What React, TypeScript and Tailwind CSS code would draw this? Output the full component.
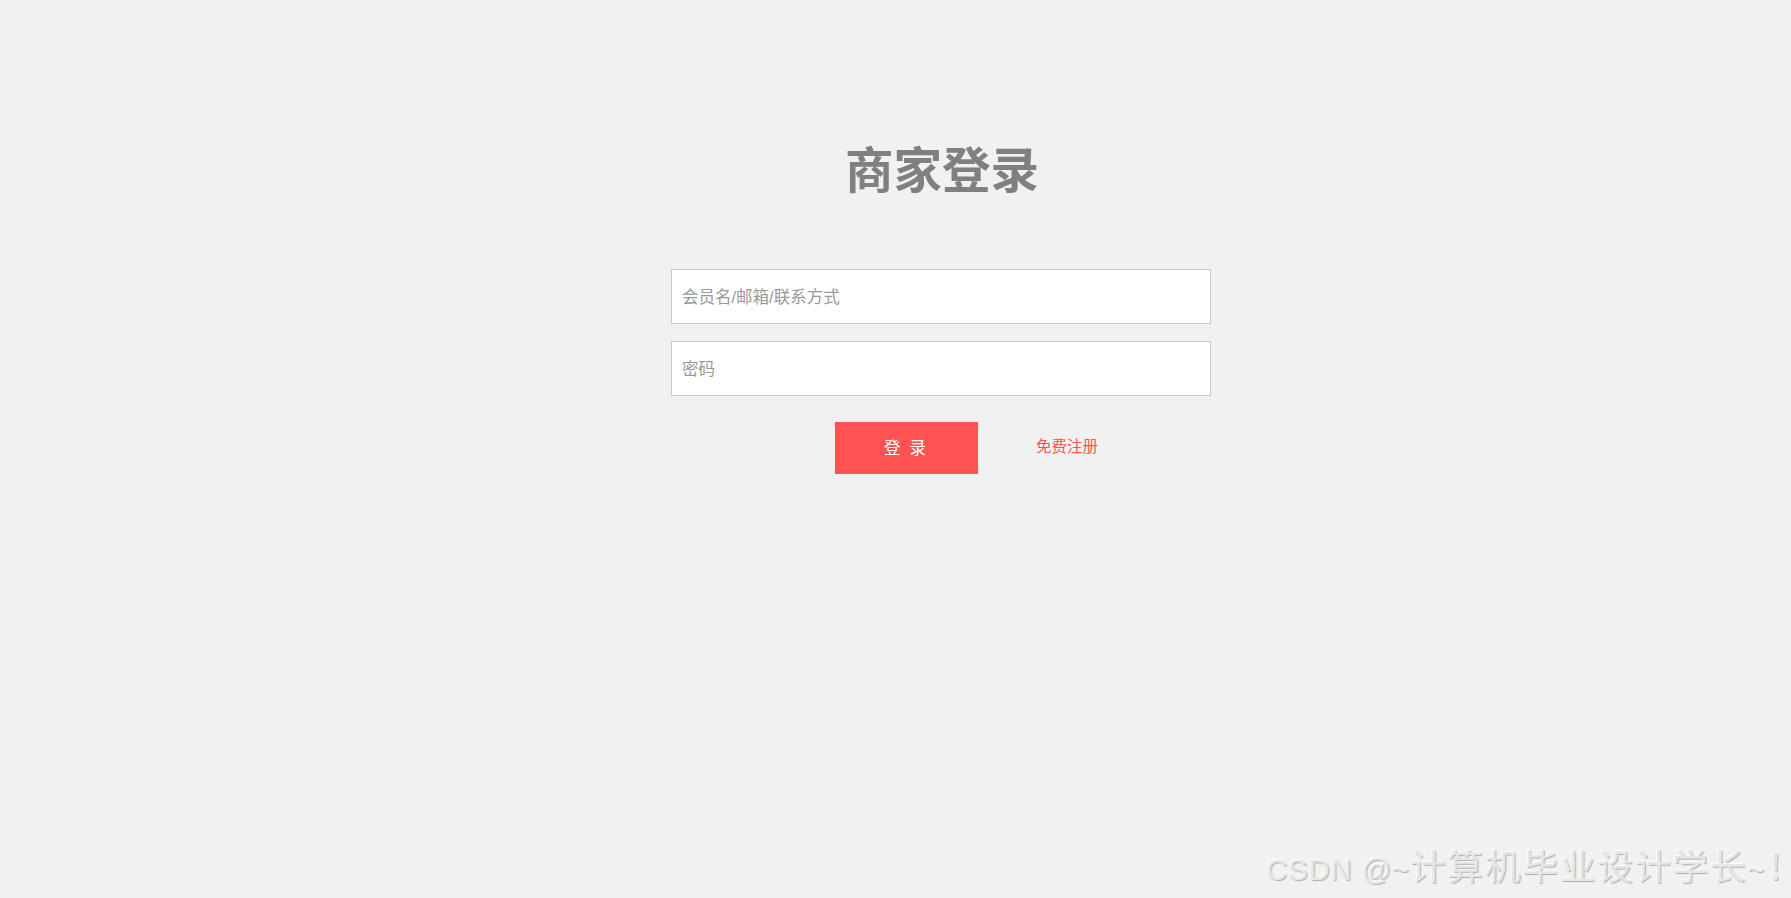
import React from "react";

export default function App() {
  return (
    <div
      className="relative min-h-[898px] w-full overflow-hidden bg-[#f1f1f1]"
      style={{ fontFamily: '"Liberation Sans", "Noto Sans CJK SC", sans-serif' }}
    >
      <div className="ml-[671px] w-[540px] pt-[136px]">
        <h1 className="ml-[174px] whitespace-nowrap text-[48.5px] font-bold leading-[70px] text-[#808080]">
          商家登录
        </h1>
        <div className="mt-[63px] flex flex-col gap-[17px]">
          <input
            className="h-[55px] w-full border border-[#c9c9c9] bg-white px-[10px] pt-[2px] text-[16.5px] text-[#333] outline-none placeholder:text-[#999]"
            placeholder="会员名/邮箱/联系方式"
          />
          <input
            type="password"
            className="h-[55px] w-full border border-[#c9c9c9] bg-white px-[10px] pt-[2px] text-[16.5px] text-[#333] outline-none placeholder:text-[#999]"
            placeholder="密码"
          />
        </div>
        <div className="mt-[26px] flex items-start">
          <button className="ml-[164px] h-[52px] w-[143px] bg-[#ff5353] pl-[6px] text-[16.5px] tracking-[9px] text-white">
            登录
          </button>
          <a className="ml-[58px] mt-[13px] text-[15.5px] text-[#ff5353]">免费注册</a>
        </div>
      </div>
      <div
        className="absolute right-[0px] top-[851px] flex items-baseline whitespace-nowrap leading-none text-[#e6e6e6]"
        style={{ textShadow: "1px 1px 1px rgba(0,0,0,0.28), -1px -1px 0 rgba(255,255,255,0.9)" }}
      >
        <span className="text-[29px] tracking-[1px]">CSDN @~</span>
        <span className="text-[35.5px] tracking-[2px]">计算机毕业设计学长</span>
        <span className="text-[29px] tracking-[2px]">~</span>
        <span className="text-[35.5px] tracking-[-11px]">！</span>
      </div>
    </div>
  );
}
